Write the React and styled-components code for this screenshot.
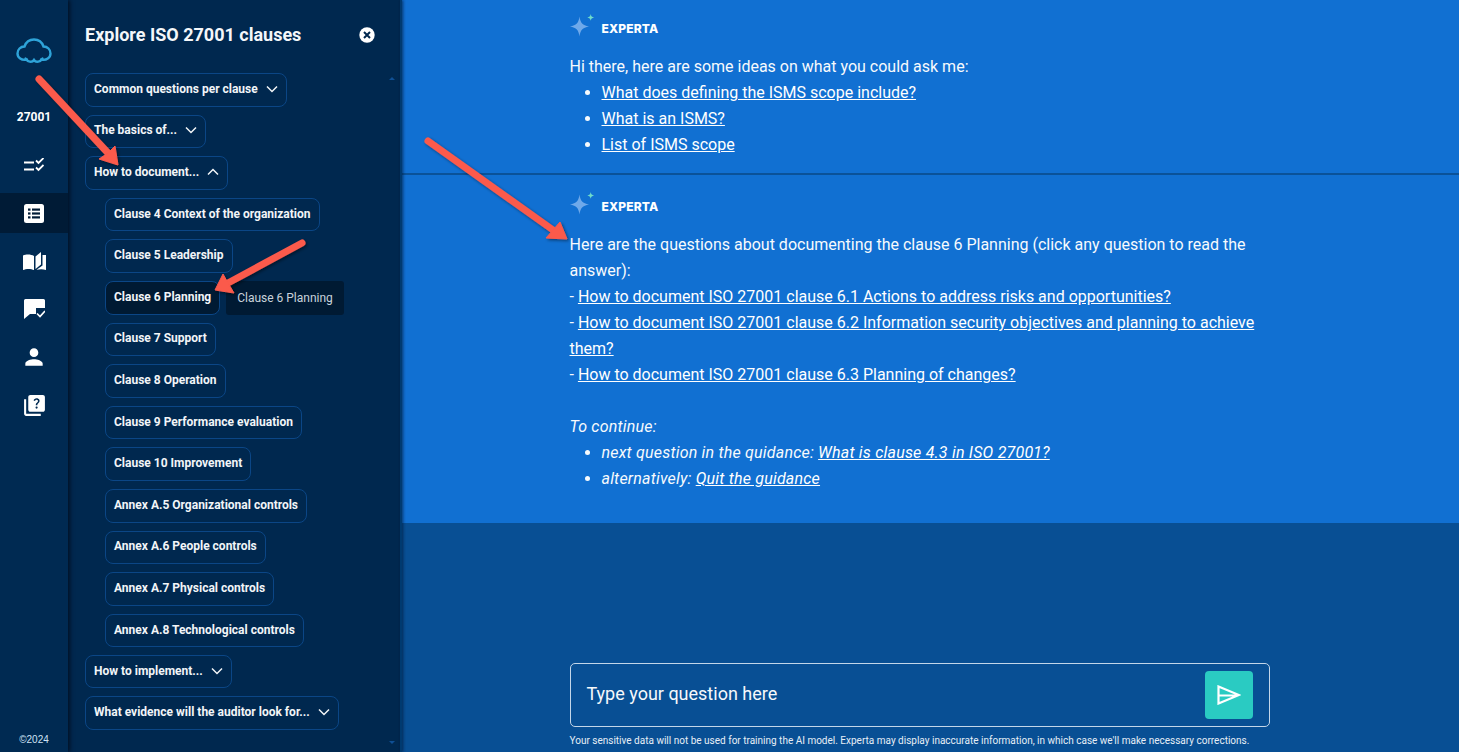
import React from "react";
import styled, { createGlobalStyle } from "styled-components";
import { MdPerson, MdQuiz } from "react-icons/md";

const Global = createGlobalStyle`
  html, body { margin: 0; height: 100%; overflow: hidden; }
  body { font-family: Roboto, "Liberation Sans", sans-serif; background: #084f94; color: #fff; }
  #root { height: 100%; }
`;

const Page = styled.div`
  position: relative;
  display: flex;
  width: 100%;
  height: 752px;
  overflow: hidden;
`;

const Rail = styled.nav`
  width: 68px;
  flex: none;
  display: flex;
  flex-direction: column;
  align-items: center;
  background: #002a52;
  box-shadow: 2px 0 4px rgba(0, 10, 25, 0.75);
  z-index: 2;
`;

const LogoWrap = styled.div`
  height: 38px;
  margin-top: 32px;
  display: flex;
  align-items: center;
  justify-content: center;
`;

const RailLabel = styled.div`
  margin-top: 39px;
  height: 16px;
  line-height: 16px;
  font-size: 12px;
  font-weight: 700;
`;

const RailIcons = styled.div`
  margin-top: 20px;
  width: 100%;
  display: flex;
  flex-direction: column;
`;

const RailItem = styled.div`
  height: 40px;
  margin-bottom: 8px;
  display: flex;
  align-items: center;
  justify-content: center;
  background: ${(p) => (p.$active ? "#001b36" : "transparent")};
`;

const Copyright = styled.div`
  margin-top: auto;
  margin-bottom: 6px;
  font-size: 10px;
  line-height: 12px;
  color: #cfe2f5;
  font-family: "Liberation Sans", sans-serif;
`;

const Panel = styled.aside`
  width: 332px;
  flex: none;
  background: #00284f;
  position: relative;
  display: flex;
  flex-direction: column;
  padding: 23px 0 0 17px;
  box-sizing: border-box;
`;

const PanelEdge = styled.div`
  width: 2px;
  flex: none;
  background: #003a70;
  box-shadow: 1px 0 3px rgba(0, 20, 50, 0.8);
  z-index: 1;
`;

const PanelHead = styled.div`
  display: flex;
  align-items: center;
  justify-content: space-between;
  padding-right: 25px;
  height: 24px;
  margin-bottom: 26px;
`;

const PanelTitle = styled.h2`
  margin: 0;
  font-size: 18px;
  line-height: 24px;
  font-weight: 700;
  color: #f4f7fa;
`;

const Stack = styled.div`
  display: flex;
  flex-direction: column;
  align-items: flex-start;
  gap: 8px;
`;

const SubStack = styled(Stack)`
  padding-left: 20px;
  height: 449px;
  overflow: hidden;
`;

const Chip = styled.button`
  flex: none;
  height: 33.6px;
  box-sizing: border-box;
  display: inline-flex;
  align-items: center;
  gap: 8px;
  padding: 0 8px 2px;
  border: 1px solid #0b4686;
  border-radius: 8px;
  background: ${(p) => (p.$active ? "#001a33" : "transparent")};
  color: #f2f5f8;
  font-family: Roboto, sans-serif;
  font-size: 12px;
  font-weight: 700;
  white-space: nowrap;
  svg { flex: none; }
`;

const Tooltip = styled.div`
  position: absolute;
  left: 226px;
  top: 281px;
  width: 118px;
  height: 34px;
  border-radius: 3px;
  background: #001a33;
  color: #c9d3dc;
  font-size: 12px;
  line-height: 34px;
  text-align: center;
  z-index: 3;
`;

const ScrollArrow = styled.div`
  position: absolute;
  right: 5px;
  width: 0;
  height: 0;
  border-left: 3px solid transparent;
  border-right: 3px solid transparent;
  ${(p) => (p.$down ? "border-top: 3px solid #0f4f94; bottom: 8px;" : "border-bottom: 3px solid #0f4f94; top: 77px;")}
`;

const Main = styled.main`
  flex: 1;
  min-width: 0;
  display: flex;
  flex-direction: column;
  background: #084f94;
`;

const Message = styled.section`
  background: #1170d2;
  padding: ${(p) => p.$pad};
  border-bottom: ${(p) => (p.$rule ? "2px solid #0a5299" : "none")};
`;

const Column = styled.div`
  width: 700px;
  margin-left: 167.5px;
`;

const Author = styled.div`
  display: flex;
  align-items: center;
  gap: 7px;
  height: 28px;
  margin-bottom: 12px;
  font-family: Inter, sans-serif;
  font-size: 12px;
  font-weight: 800;
  letter-spacing: 0.15px;
`;

const Body = styled.div`
  font-size: 16px;
  line-height: 26px;
  color: #f7fafd;
`;

const Bullets = styled.ul`
  margin: 0;
  padding-left: 32px;
`;

const Link = styled.a`
  color: #fff;
  text-decoration: underline;
`;

const Em = styled.em`
  letter-spacing: 0.2px;
`;

const Gap = styled.div`
  height: 26px;
`;

const Composer = styled.div`
  margin-top: auto;
  margin-left: 167.5px;
  width: 700px;
  padding-bottom: 5px;
`;

const InputBox = styled.div`
  height: 64px;
  box-sizing: border-box;
  border: 1px solid #c3d6e9;
  border-radius: 5px;
  display: flex;
  align-items: center;
  justify-content: space-between;
  padding: 0 16px;
  font-size: 18px;
  color: #f5f8fb;
`;

const Placeholder = styled.span`
  margin-bottom: 4px;
`;

const SendButton = styled.button`
  width: 48px;
  height: 48px;
  border: none;
  border-radius: 4px;
  background: #2acbc2;
  padding: 0;
  display: flex;
  align-items: center;
  justify-content: center;
`;

const Disclaimer = styled.p`
  margin: 8px 0 0;
  font-size: 10px;
  line-height: 12px;
  color: #e6eef6;
`;

const Overlay = styled.svg`
  position: absolute;
  inset: 0;
  z-index: 5;
  pointer-events: none;
`;

const Cloud = () => (
  <svg width="36" height="26" viewBox="0 0 36 26" fill="none" stroke="#2ea3d8" strokeWidth="2.400" strokeLinecap="round">
    <path d="M11 21.500C5.500 23 1.500 19.500 1.500 15.500 1.500 11.500 4.500 8.500 8.500 8.500 10 4 14 1.500 18 1.500s8 2.500 9.500 7c4 0 7 3 7 7 0 4-4 7.500-9.500 6" />
    <path d="M9.500 20.500c2 3.500 6.500 4.500 8.500 1.500 2 3 6.500 2 8.500-1.500" />
  </svg>
);

const ChecksIcon = () => (
  <svg width="20" height="15" viewBox="0 0 20 15" fill="none" stroke="#fff" strokeWidth="1.800">
    <path d="M0 4.500h10M0 11.500h10" />
    <path d="M12 2.500l2.500 2.500L19.500 0M12 9.500l2.500 2.500 5-5" />
  </svg>
);

const ListIcon = () => (
  <svg width="20" height="19" viewBox="0 0 20 19">
    <rect width="20" height="19" rx="2.500" fill="#fff" />
    <g fill="#001b36">
      <rect x="4" y="4.500" width="2.500" height="2.200" />
      <rect x="4" y="8.400" width="2.500" height="2.200" />
      <rect x="4" y="12.300" width="2.500" height="2.200" />
      <rect x="8" y="4.500" width="8" height="2.200" />
      <rect x="8" y="8.400" width="8" height="2.200" />
      <rect x="8" y="12.300" width="8" height="2.200" />
    </g>
  </svg>
);

const BookIcon = () => (
  <svg width="23" height="18" viewBox="0 0 23 18" fill="#fff">
    <path d="M0 3.500c3-1.500 8-1.500 11 .5v14c-3-1.500-8-1.500-11 0z" />
    <path d="M12.500 4.500L18 0v12.500L12.500 17z" />
    <path d="M19.500 3H23v15c-3-1-6-1-9.500-.2l6-4.300z" />
  </svg>
);

const FeedbackIcon = () => (
  <svg width="21" height="20" viewBox="0 0 21 20">
    <path d="M1.500 0h18A1.500 1.500 0 0 1 21 1.500V9h-9v6H6l-6 5V1.500A1.500 1.500 0 0 1 1.500 0z" fill="#fff" />
    <path d="M13 14.500l3 3 5-5.500" fill="none" stroke="#fff" strokeWidth="1.700" />
  </svg>
);

const CloseIcon = () => (
  <svg width="16" height="16" viewBox="0 0 16 16">
    <circle cx="8" cy="8" r="7.700" fill="#fff" />
    <path d="M5 5l6 6M11 5l-6 6" stroke="#00284f" strokeWidth="2" />
  </svg>
);

const Chevron = ({ up }) => (
  <svg width="12" height="8" viewBox="0 0 12 8" fill="none" stroke="#f2f5f8" strokeWidth="1.500">
    <path d={up ? "M1 6.500l5-5 5 5" : "M1 1.500l5 5 5-5"} />
  </svg>
);

const Sparkle = () => (
  <svg width="25" height="28" viewBox="0 0 25 28">
    <path d="M9.500 2.500c.9 6.500 3 8.700 9.500 10-6.500 1.300-8.600 3.500-9.500 10-.9-6.500-3-8.700-9.500-10 6.500-1.300 8.600-3.500 9.500-10z" fill="#6fa9ea" />
    <path d="M20.700 -.5c.4 2.300 1.100 3 3.400 3.400-2.300 .4-3 1.100-3.400 3.400-.4-2.300-1.100-3-3.400-3.400 2.300-.4 3-1.100 3.400-3.400z" fill="#6fdccb" transform="translate(0 .5)" />
  </svg>
);

const SendIcon = () => (
  <svg width="24" height="20" viewBox="0 0 24 20" fill="none" stroke="#fff" strokeWidth="2.200" strokeLinejoin="miter">
    <path d="M1.500 1.500L22 10 1.500 18.500zM1.500 10.500H20" />
  </svg>
);

const ARROWS = [
  { tail: [39, 79], neck: [108, 153], tip: [118, 165], a: [99, 159], b: [115, 146] },
  { tail: [428, 141], neck: [553, 230], tip: [567, 239], a: [546, 238], b: [560, 222] },
  { tail: [302, 243], neck: [228, 283], tip: [215, 290], a: [223, 274], b: [234, 293] },
];

const Arrows = () => (
  <Overlay width="1459" height="752">
    <defs>
      <filter id="arrowShadow" x="-20%" y="-20%" width="140%" height="140%">
        <feDropShadow dx="1.500" dy="1.500" stdDeviation="1.500" floodColor="#000" floodOpacity="0.45" />
      </filter>
    </defs>
    {ARROWS.map((r, i) => (
      <g key={i} filter="url(#arrowShadow)" fill="#fb5a4b" stroke="#fb5a4b">
        <line x1={r.tail[0]} y1={r.tail[1]} x2={r.neck[0]} y2={r.neck[1]} strokeWidth="7" strokeLinecap="round" />
        <polygon points={`${r.tip} ${r.a} ${r.neck} ${r.b}`} strokeWidth="1" />
      </g>
    ))}
  </Overlay>
);

const SUB = [
  "Clause 4 Context of the organization",
  "Clause 5 Leadership",
  "Clause 6 Planning",
  "Clause 7 Support",
  "Clause 8 Operation",
  "Clause 9 Performance evaluation",
  "Clause 10 Improvement",
  "Annex A.5 Organizational controls",
  "Annex A.6 People controls",
  "Annex A.7 Physical controls",
  "Annex A.8 Technological controls",
];

const Group = ({ label, open }) => (
  <Chip>
    {label}
    <Chevron up={open} />
  </Chip>
);

const Author1 = () => (
  <Author>
    <Sparkle />
    EXPERTA
  </Author>
);

export default function App() {
  return (
    <Page>
      <Global />
      <Rail>
        <LogoWrap><Cloud /></LogoWrap>
        <RailLabel>27001</RailLabel>
        <RailIcons>
          <RailItem><ChecksIcon /></RailItem>
          <RailItem $active><ListIcon /></RailItem>
          <RailItem><BookIcon /></RailItem>
          <RailItem><FeedbackIcon /></RailItem>
          <RailItem><MdPerson size={26} color="#fff" /></RailItem>
          <RailItem><MdQuiz size={25} color="#fff" /></RailItem>
        </RailIcons>
        <Copyright>©2024</Copyright>
      </Rail>
      <Panel>
        <PanelHead>
          <PanelTitle>Explore ISO 27001 clauses</PanelTitle>
          <CloseIcon />
        </PanelHead>
        <Stack>
          <Group label="Common questions per clause" />
          <Group label="The basics of..." />
          <Group label="How to document..." open />
          <SubStack>
            {SUB.map((s) => (
              <Chip key={s} $active={s === "Clause 6 Planning"}>{s}</Chip>
            ))}
          </SubStack>
          <Group label="How to implement..." />
          <Group label="What evidence will the auditor look for..." />
        </Stack>
        <ScrollArrow />
        <ScrollArrow $down />
      </Panel>
      <PanelEdge />
      <Tooltip>Clause 6 Planning</Tooltip>
      <Main>
        <Message $pad="14px 0 15px" $rule>
          <Column>
            <Author1 />
            <Body>
              Hi there, here are some ideas on what you could ask me:
              <Bullets>
                <li><Link>What does defining the ISMS scope include?</Link></li>
                <li><Link>What is an ISMS?</Link></li>
                <li><Link>List of ISMS scope</Link></li>
              </Bullets>
            </Body>
          </Column>
        </Message>
        <Message $pad="17px 0 31px">
          <Column>
            <Author1 />
            <Body>
              Here are the questions about documenting the clause 6 Planning (click any question to read the answer):
              <br />- <Link>How to document ISO 27001 clause 6.1 Actions to address risks and opportunities?</Link>
              <br />- <Link>How to document ISO 27001 clause 6.2 Information security objectives and planning to achieve them?</Link>
              <br />- <Link>How to document ISO 27001 clause 6.3 Planning of changes?</Link>
              <Gap />
              <Em>To continue:</Em>
              <Bullets>
                <li><Em>next question in the quidance: <Link>What is clause 4.3 in ISO 27001?</Link></Em></li>
                <li><Em>alternatively: <Link>Quit the guidance</Link></Em></li>
              </Bullets>
            </Body>
          </Column>
        </Message>
        <Composer>
          <InputBox>
            <Placeholder>Type your question here</Placeholder>
            <SendButton><SendIcon /></SendButton>
          </InputBox>
          <Disclaimer>
            Your sensitive data will not be used for training the AI model. Experta may display inaccurate information, in which case we'll make necessary corrections.
          </Disclaimer>
        </Composer>
      </Main>
      <Arrows />
    </Page>
  );
}
